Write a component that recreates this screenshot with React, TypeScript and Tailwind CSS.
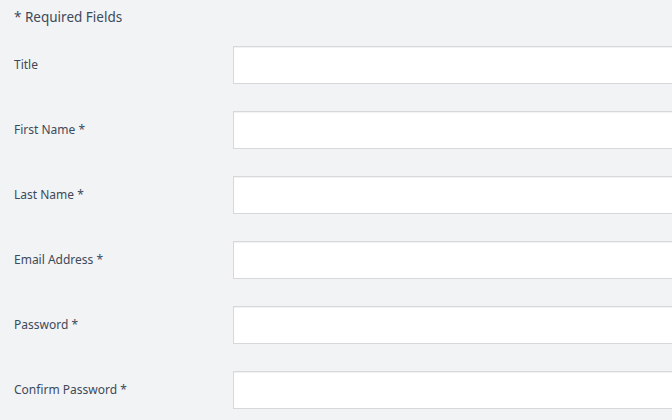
const fields = [
  "Title",
  "First Name *",
  "Last Name *",
  "Email Address *",
  "Password *",
  "Confirm Password *",
];

export default function App() {
  return (
    <div
      className="w-[672px] h-[420px] overflow-hidden bg-[#f2f3f5] text-[#3d4a5a] pl-[14px] pt-[8px]"
      style={{ fontFamily: '"Noto Sans", "Open Sans", sans-serif' }}
    >
      <div className="text-[13.5px] leading-[18px] mb-[20px]">* Required Fields</div>
      <div className="flex flex-col gap-[27px]">
        {fields.map((label) => (
          <div key={label} className="flex items-center">
            <label className="w-[219px] shrink-0 text-[12px]">{label}</label>
            <input
              type="text"
              className="h-[38px] w-[480px] shrink-0 bg-white border border-[#d6d8db] shadow-[inset_0_1px_1px_rgba(0,0,0,0.06)] outline-none"
            />
          </div>
        ))}
      </div>
    </div>
  );
}
